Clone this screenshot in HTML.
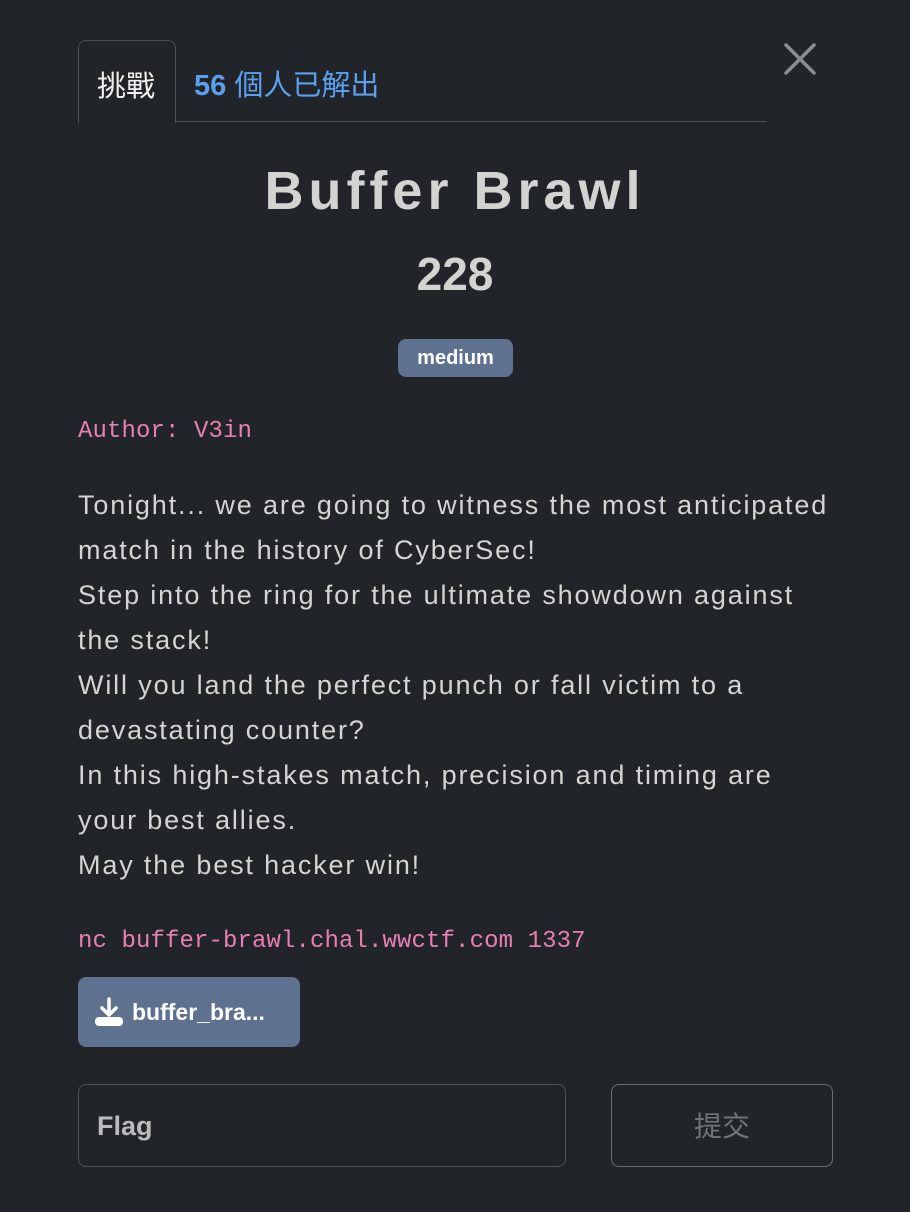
<!DOCTYPE html>
<html><head><meta charset="utf-8"><style>
html,body{margin:0;padding:0;background:#212429;width:910px;height:1212px;overflow:hidden}
body{position:relative;font-family:"Liberation Sans","Noto Sans CJK TC",sans-serif;color:#d3d5d3}
.abs{position:absolute}
.tab{left:78px;top:40px;width:96px;height:82px;border:1px solid #4a4e55;border-bottom:none;border-radius:8px 8px 0 0;background:#212429;z-index:2}
.tab span{position:absolute;left:18px;top:22px;font-size:29px;color:#f0f0f0;font-family:"Noto Sans CJK TC",sans-serif}
.line{left:176px;top:121px;width:591px;height:1px;background:#4a4e55}
.solves{left:194px;top:62px;font-size:29px;color:#5aa0ee;font-family:"Liberation Sans","Noto Sans CJK TC",sans-serif}
.title{left:0;width:910px;text-align:center;top:160px;font-size:54px;font-weight:bold;letter-spacing:5px;color:#d2d4d1}
.pts{left:0;width:910px;text-align:center;top:247px;font-size:46px;font-weight:bold;color:#d2d4d1}
.badge{left:398px;top:339px;width:115px;height:38px;border-radius:8px;background:#5e7290;color:#fff;font-weight:bold;font-size:20px;text-align:center;line-height:38px}
.mono{font-family:"Liberation Mono",monospace;color:#e77fb4;font-size:24px;left:78px;letter-spacing:0.1px}
.desc{left:78px;top:483px;font-size:27px;line-height:45px;letter-spacing:1.85px;white-space:nowrap;color:#d3d5d3}
.dl{left:78px;top:977px;width:222px;height:70px;border-radius:8px;background:#5e7290;color:#fff;font-weight:bold;font-size:23px}
.inp{left:78px;top:1084px;width:486px;height:81px;border:1px solid #4e5259;border-radius:8px}
.inp span{position:absolute;left:18px;top:26px;font-size:27px;font-weight:bold;color:#b9bbbd}
.sub{left:611px;top:1084px;width:220px;height:81px;border:1px solid #6a6e74;border-radius:8px;text-align:center;line-height:81px;font-size:28px;color:#707378;font-family:"Noto Sans CJK TC",sans-serif}
</style></head><body>
<div class="abs line"></div>
<div class="abs tab"><span>挑戰</span></div>
<div class="abs solves"><b style="font-weight:bold">56</b> 個人已解出</div>
<svg class="abs" style="left:783px;top:42px" width="34" height="34" viewBox="0 0 34 34"><path d="M3 3L31 31M31 3L3 31" stroke="#8a8d91" stroke-width="3.5" stroke-linecap="round"/></svg>
<div class="abs title">Buffer Brawl</div>
<div class="abs pts">228</div>
<div class="abs badge">medium</div>
<div class="abs mono" style="top:418px">Author: V3in</div>
<div class="abs desc">Tonight... we are going to witness the most anticipated<br>match in the history of CyberSec!<br>Step into the ring for the ultimate showdown against<br>the stack!<br>Will you land the perfect punch or fall victim to a<br>devastating counter?<br>In this high-stakes match, precision and timing are<br>your best allies.<br>May the best hacker win!</div>
<div class="abs mono" style="top:928px">nc buffer-brawl.chal.wwctf.com 1337</div>
<div class="abs dl">
<svg class="abs" style="left:16px;top:20px" width="30" height="30" viewBox="0 0 30 30"><path d="M15 2V18M8 11L15 18L22 11" stroke="#fff" stroke-width="3.5" fill="none" stroke-linecap="round" stroke-linejoin="round"/><rect x="1" y="20" width="28" height="9" rx="4" fill="#fff"/></svg>
<span class="abs" style="left:54px;top:22px">buffer_bra...</span></div>
<div class="abs inp"><span>Flag</span></div>
<div class="abs sub">提交</div>
</body></html>
